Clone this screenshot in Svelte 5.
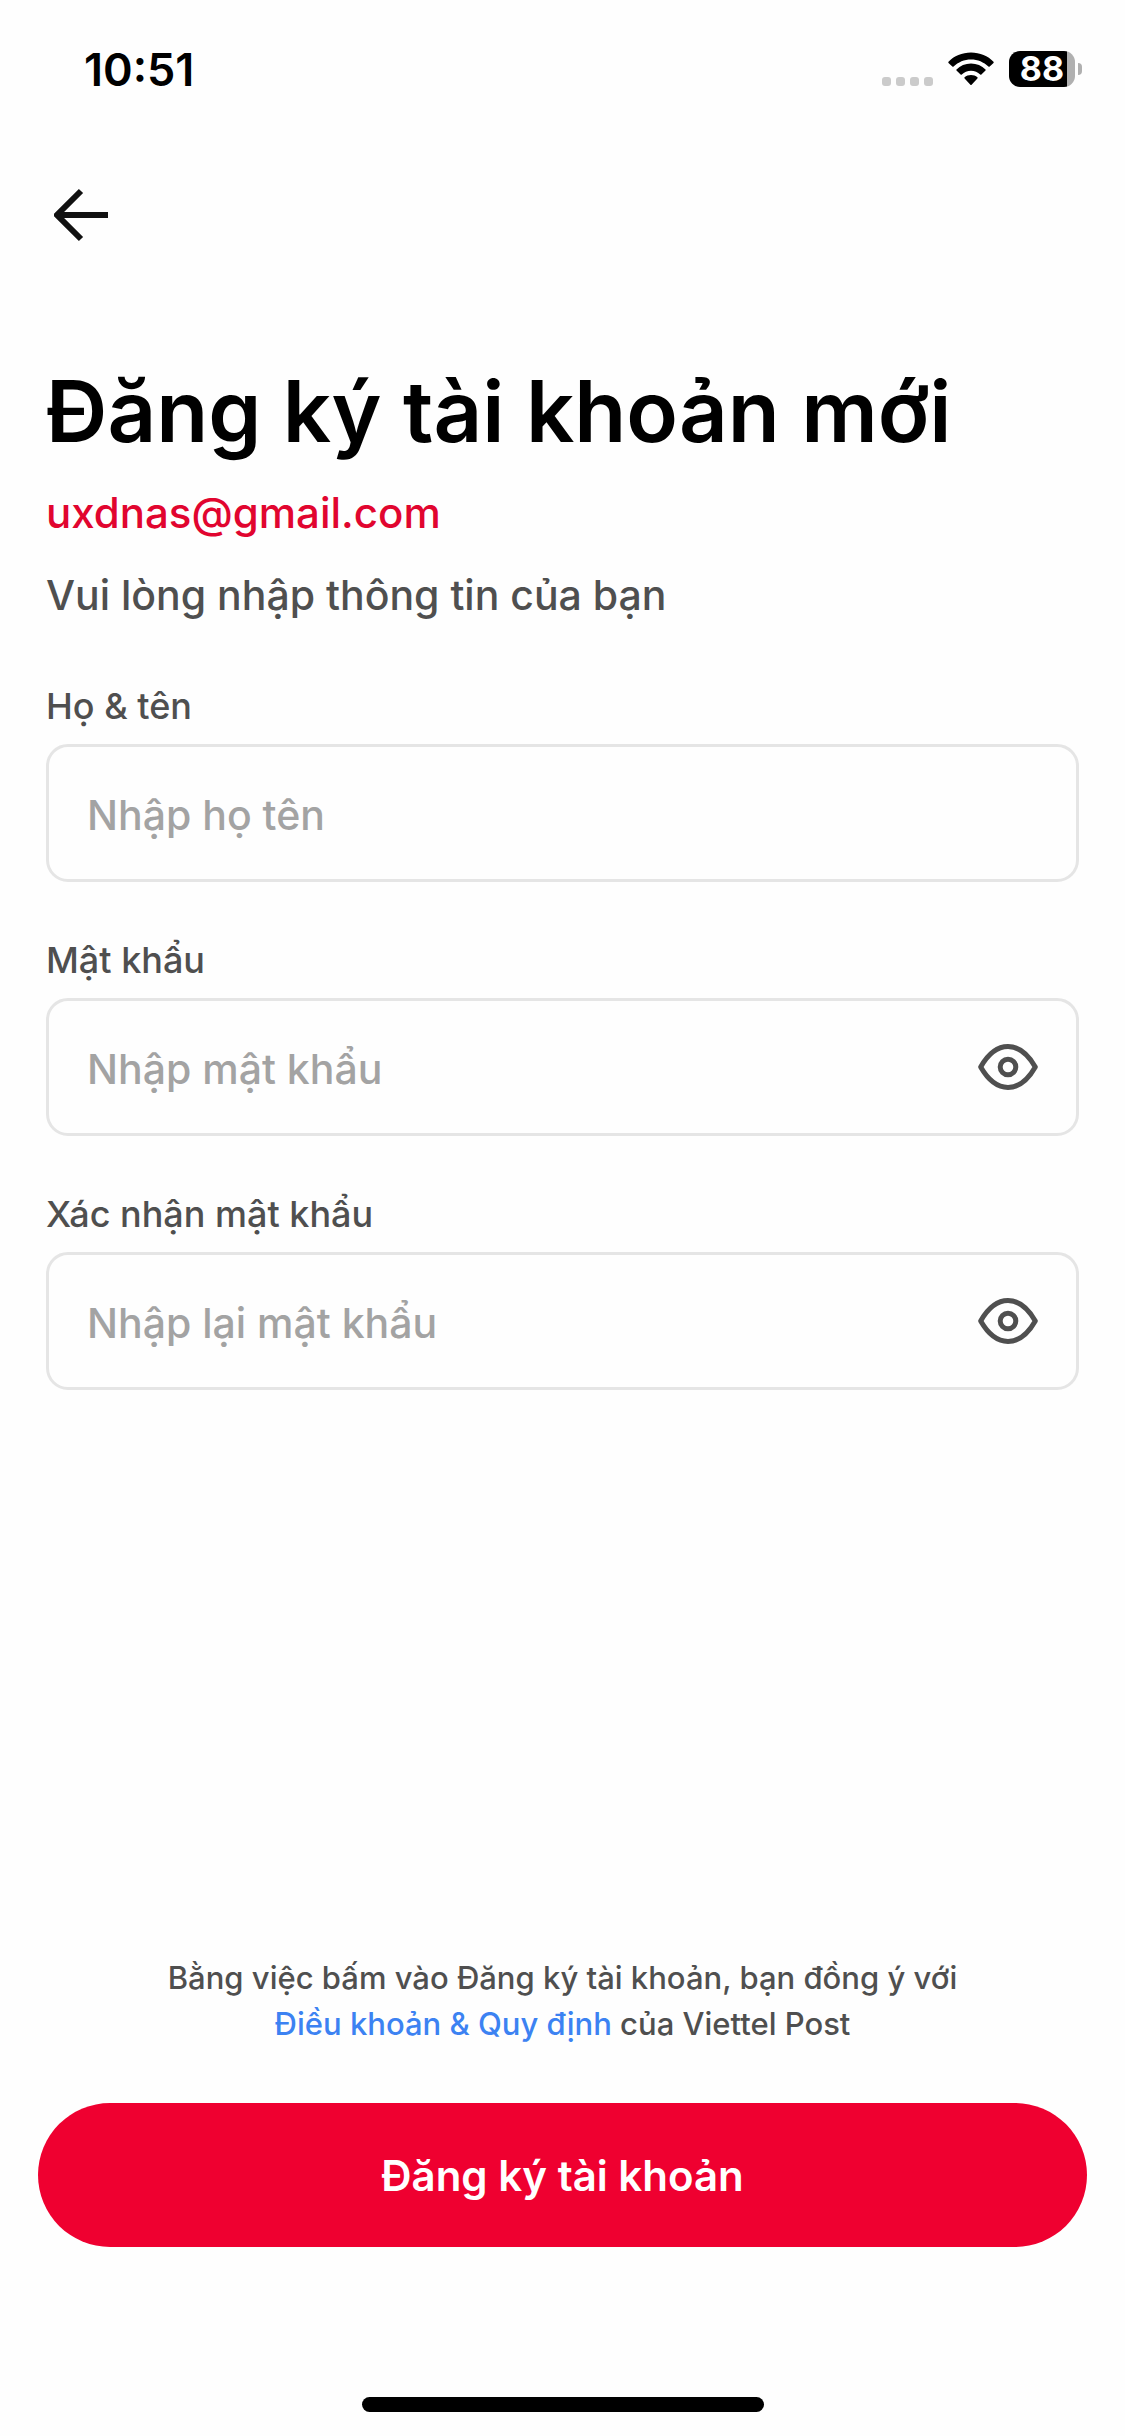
<script>
	let fullName = $state('');
	let password = $state('');
	let confirmPassword = $state('');
	let showPassword = $state(false);
	let showConfirm = $state(false);
</script>

{#snippet eye()}
	<svg class="eye" viewBox="0 0 60 46" aria-hidden="true">
		<path
			d="M2.7 23C9 12 18.500 2.600 30 2.600S51 12 57.300 23C51 34 41.500 43.400 30 43.400S9 34 2.700 23Z"
		/>
		<circle cx="30" cy="23" r="7.800" />
	</svg>
{/snippet}

<div class="page">
	<div class="status-bar">
		<span class="time">10:51</span>
		<div class="indicators">
			<svg class="signal" viewBox="0 0 51 9" aria-hidden="true">
				{#each [0, 14, 28, 42] as x}
					<rect {x} width="9" height="9" rx="3" />
				{/each}
			</svg>
			<svg class="wifi" viewBox="0 0 46 34" aria-hidden="true">
				<path d="M23 0.500C14 0.500 6 4 0.500 9.700Q0 10.300 0.500 10.900L4.300 14.500Q5 15 5.600 14.500C10.200 10 16.300 7.400 23 7.400S35.800 10 40.400 14.500Q41 15 41.700 14.500L45.500 10.900Q46 10.300 45.500 9.700C40 4 32 0.500 23 0.500Z" />
				<path d="M23 11.600C17.300 11.600 12.200 13.800 8.500 17.400Q8 18 8.500 18.600L12.600 22.500Q13.200 23 13.800 22.500C16.200 20.200 19.400 18.800 23 18.800S29.800 20.200 32.200 22.500Q32.800 23 33.400 22.500L37.500 18.600Q38 18 37.500 17.400C33.800 13.800 28.700 11.600 23 11.600Z" />
				<path d="M23 23C20.500 23 18.300 23.900 16.600 25.300Q16 25.900 16.600 26.500L22.400 32.800Q23 33.400 23.600 32.800L29.400 26.500Q30 25.900 29.400 25.300C27.700 23.900 25.500 23 23 23Z" />
			</svg>
			<div class="battery">
				<span class="level">88</span>
			</div>
		</div>
	</div>

	<nav class="top-nav">
		<button class="back" type="button" aria-label="Quay lại">
			<svg viewBox="0 0 54 54" aria-hidden="true">
				<path d="M54 27H4M27 3L3 27L27 51" />
			</svg>
		</button>
	</nav>

	<form class="form">
		<header>
			<h1>Đăng ký tài khoản mới</h1>
			<p class="email">uxdnas@gmail.com</p>
			<p class="hint">Vui lòng nhập thông tin của bạn</p>
		</header>

		<div class="field">
			<label for="full-name">Họ & tên</label>
			<div class="box">
				<input id="full-name" type="text" placeholder="Nhập họ tên" bind:value={fullName} />
			</div>
		</div>

		<div class="field">
			<label for="password">Mật khẩu</label>
			<div class="box">
				<input
					id="password"
					type={showPassword ? 'text' : 'password'}
					placeholder="Nhập mật khẩu"
					bind:value={password}
				/>
				<button
					class="toggle"
					type="button"
					aria-label="Hiện mật khẩu"
					onclick={() => (showPassword = !showPassword)}
				>
					{@render eye()}
				</button>
			</div>
		</div>

		<div class="field">
			<label for="confirm">Xác nhận mật khẩu</label>
			<div class="box">
				<input
					id="confirm"
					type={showConfirm ? 'text' : 'password'}
					placeholder="Nhập lại mật khẩu"
					bind:value={confirmPassword}
				/>
				<button
					class="toggle"
					type="button"
					aria-label="Hiện mật khẩu"
					onclick={() => (showConfirm = !showConfirm)}
				>
					{@render eye()}
				</button>
			</div>
		</div>

		<footer>
			<p class="terms">
				Bằng việc bấm vào Đăng ký tài khoản, bạn đồng ý với<br />
				<a href="/terms">Điều khoản & Quy định</a> của Viettel Post
			</p>
			<button class="submit" type="submit">Đăng ký tài khoản</button>
		</footer>
	</form>

	<div class="home-indicator"></div>
</div>

<style>
	:global(body) {
		background: #fefefe;
	}
	.page {
		box-sizing: border-box;
		min-height: 100vh;
		display: flex;
		flex-direction: column;
		padding-bottom: 24px;
		font-family: Inter, 'Liberation Sans', sans-serif;
		font-weight: 500;
		color: #4f4f4f;
	}
	button {
		border: none;
		padding: 0;
		background: none;
		font-family: inherit;
		cursor: pointer;
	}
	svg {
		display: block;
	}

	.status-bar {
		display: flex;
		justify-content: space-between;
		align-items: center;
		height: 138px;
		padding: 0 43px 0 84px;
		color: #000;
	}
	.time {
		font-size: 45px;
		font-weight: 600;
	}
	.indicators {
		display: flex;
		align-items: center;
	}
	.signal {
		width: 51px;
		height: 9px;
		margin: 24px 15px 0 0;
		fill: #cbcbcb;
	}
	.wifi {
		width: 46px;
		height: 34px;
		margin-right: 15px;
	}
	.battery {
		position: relative;
		width: 66px;
		height: 36px;
		border-radius: 11px;
		margin-right: 7px;
		background: linear-gradient(90deg, #000 88%, #b0b0b0 88%);
	}
	.battery::after {
		content: '';
		position: absolute;
		left: 69px;
		top: 12px;
		width: 4px;
		height: 12px;
		border-radius: 0 6px 6px 0;
		background: #b0b0b0;
	}
	.level {
		display: block;
		text-align: center;
		line-height: 36px;
		font-size: 34px;
		font-weight: 700;
		color: #fff;
	}

	.top-nav {
		padding: 50px 54px 0;
	}
	.back {
		display: block;
	}
	.back svg {
		width: 54px;
		height: 54px;
		fill: none;
		stroke: #111;
		stroke-width: 6;
	}

	.form {
		flex: 1;
		display: flex;
		flex-direction: column;
		gap: 56px;
		padding: 114px 46px 0;
	}
	h1 {
		margin: 0;
		font-size: 85px;
		line-height: 112px;
		font-weight: 600;
		color: #000;
	}
	header {
		padding-bottom: 4px;
	}
	header p {
		margin: 0;
		font-size: 42px;
		line-height: 58px;
	}
	.email {
		margin-top: 16px;
		color: #e1052f;
	}
	header .hint {
		margin-top: 24px;
		font-size: 41px;
	}

	.field {
		display: flex;
		flex-direction: column;
		gap: 16px;
	}
	label {
		font-size: 36px;
		line-height: 44px;
	}
	.box {
		box-sizing: border-box;
		display: flex;
		align-items: center;
		height: 138px;
		padding: 0 38px;
		border: 3px solid #e5e5e5;
		border-radius: 22px;
	}
	input {
		flex: 1;
		min-width: 0;
		border: none;
		outline: none;
		padding: 4px 0 0;
		background: none;
		font-family: inherit;
		font-size: 41px;
		font-weight: 500;
		color: #111;
	}
	input::placeholder {
		color: #a3a3a3;
		opacity: 1;
	}
	.eye {
		width: 60px;
		height: 46px;
		fill: none;
		stroke: #4f4f4f;
		stroke-width: 5;
		stroke-linejoin: round;
	}

	footer {
		margin: auto -8px 0;
	}
	.terms {
		margin: 0 0 56px;
		font-size: 31px;
		line-height: 46px;
		text-align: center;
	}
	.terms a {
		color: #3c82f2;
		text-decoration: none;
	}
	.submit {
		width: 100%;
		height: 144px;
		border-radius: 72px;
		background: #ef0030;
		font-size: 42px;
		font-weight: 600;
		color: #fff;
	}

	.home-indicator {
		width: 402px;
		height: 15px;
		margin: 150px auto 0;
		border-radius: 8px;
		background: #000;
	}
</style>
